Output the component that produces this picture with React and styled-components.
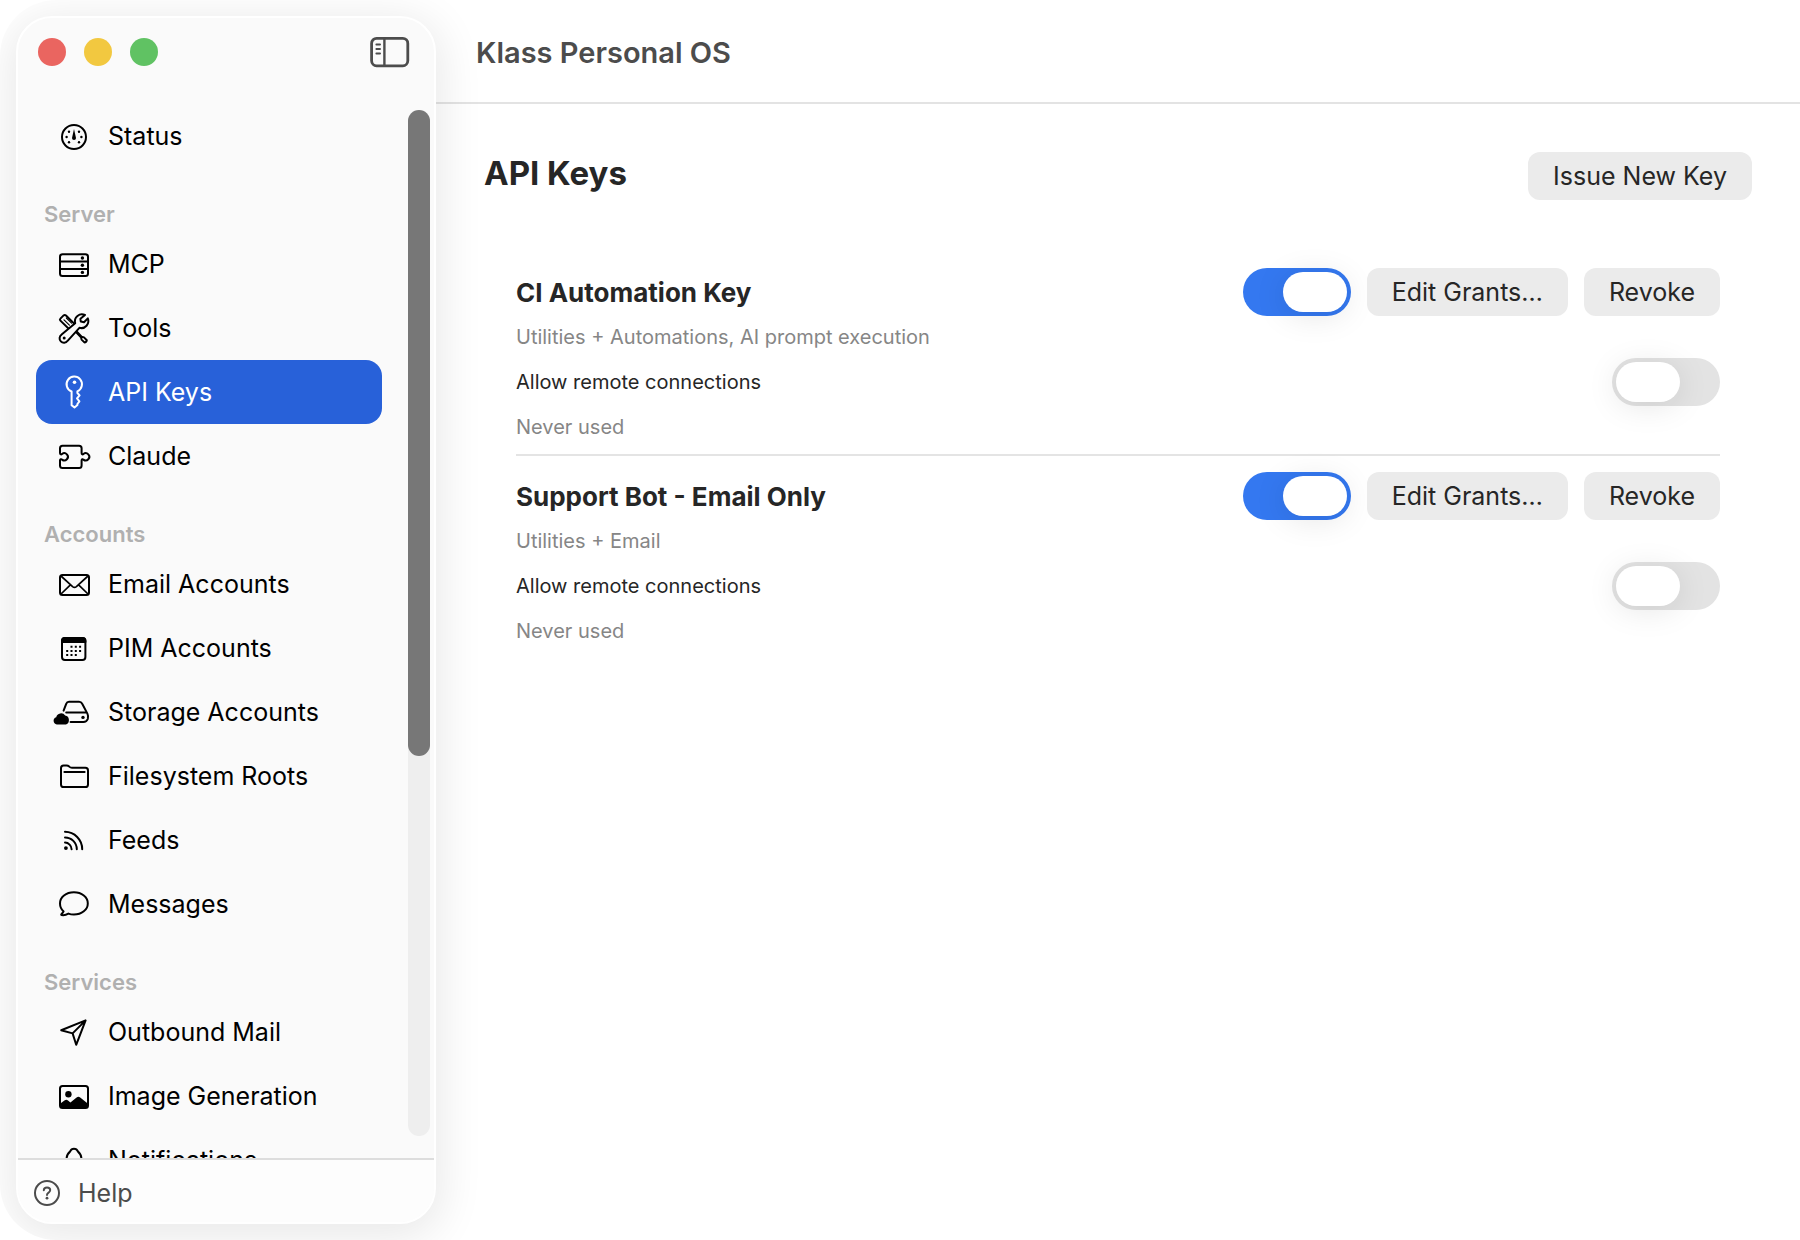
import React, { useState } from 'react';
import styled, { createGlobalStyle } from 'styled-components';

const sections = [
  { items: [{ name: "Status", icon: "gauge" }] },
  {
    title: "Server",
    items: [
      { name: "MCP", icon: "server" },
      { name: "Tools", icon: "tools" },
      { name: "API Keys", icon: "key" },
      { name: "Claude", icon: "puzzle" },
    ],
  },
  {
    title: "Accounts",
    items: [
      { name: "Email Accounts", icon: "mail" },
      { name: "PIM Accounts", icon: "calendar" },
      { name: "Storage Accounts", icon: "drive" },
      { name: "Filesystem Roots", icon: "folder" },
      { name: "Feeds", icon: "feed" },
      { name: "Messages", icon: "bubble" },
    ],
  },
  {
    title: "Services",
    items: [
      { name: "Outbound Mail", icon: "plane" },
      { name: "Image Generation", icon: "photo" },
      { name: "Notifications", icon: "bell" },
    ],
  },
];

const apiKeys = [
  { id: "ci", name: "CI Automation Key", grants: "Utilities + Automations, AI prompt execution", used: "Never used" },
  { id: "support", name: "Support Bot - Email Only", grants: "Utilities + Email", used: "Never used" },
];

const icons = {
  gauge: (
    <>
      <circle cx="22" cy="19" r="12" />
      <g fill="currentColor" stroke="none">
        <circle cx="14.6" cy="19" r="1.2" />
        <circle cx="29.4" cy="19" r="1.2" />
        <circle cx="17" cy="13.7" r="1.2" />
        <circle cx="27" cy="13.7" r="1.2" />
        <circle cx="17" cy="24.3" r="1.2" />
        <circle cx="27" cy="24.3" r="1.2" />
        <path d="M22 11 L24 20 A2 2 0 0 1 20 20 Z" />
      </g>
    </>
  ),
  server: (
    <>
      <rect x="8" y="8.2" width="28" height="21.8" rx="2.5" />
      <path d="M8 15.6 H36 M8 22.9 H36" />
      <g fill="currentColor" stroke="none">
        <circle cx="30.4" cy="12" r="1.7" />
        <circle cx="30.4" cy="19.2" r="1.7" />
        <circle cx="30.4" cy="26.4" r="1.7" />
      </g>
    </>
  ),
  tools: (
    <>
      <path d="M8.4 8.6 L11.6 5.4 Q12.8 4.4 14 5.5 L24.2 15.6 L18.8 20.8 L8.4 10.6 Q7.4 9.6 8.4 8.6 Z" />
      <path strokeWidth="1.2" d="M12 9.8 L17.4 15.2 M14.4 8 L19.6 13.2" />
      <path d="M22.6 20.6 L29 27.2 L29.6 29.6 L32.4 32.4 Q34.6 32.4 34.8 30.2 L32 27.4 L29.6 26.6 L24.2 21" />
      <path
        fill="#fafafa"
        d="M33 5 A7 7 0 0 0 23.2 13.2 L9.6 24.6 A4.4 4.4 0 1 0 15.6 30.8 L27.4 17.8 A7 7 0 0 0 35.8 8.4 L32 12.2 L28.8 11.6 L28.4 8.8 Z"
      />
      <circle cx="12.2" cy="28" r="1.5" fill="currentColor" stroke="none" />
    </>
  ),
  key: (
    <>
      <path d="M19.6 17.5 A7.7 7.7 0 1 1 25.4 17.3 L25.4 19 L27.6 21.4 L25 24.4 L27.4 27.4 L25.4 30 L25.4 31 L22.5 33.4 L19.6 31.2 Z" />
      <circle cx="22.5" cy="8.2" r="1.8" fill="currentColor" stroke="none" />
    </>
  ),
  puzzle: (
    <path d="M8 15 V10.2 A2.5 2.5 0 0 1 10.5 7.7 H27.1 A2.5 2.5 0 0 1 29.6 10.2 V15 C29.6 16.6 30.8 16.6 31.4 16 A3.6 3.6 0 1 1 31.4 21.6 C30.8 21 29.6 21 29.6 22.6 V27.4 A2.5 2.5 0 0 1 27.1 29.9 H10.5 A2.5 2.5 0 0 1 8 27.4 V22.6 C8 21 9.4 21 10 21.6 A3.6 3.6 0 1 0 10 16 C9.4 16.6 8 16.6 8 15 Z" />
  ),
  mail: (
    <>
      <rect x="8" y="9" width="29" height="20" rx="2.5" />
      <path strokeWidth="1.7" d="M9 10 L20.6 20.6 Q22.5 22.2 24.4 20.6 L36 10 M9 28 L18.4 18.8 M36 28 L26.6 18.8" />
    </>
  ),
  calendar: (
    <>
      <rect x="10" y="8" width="23.4" height="22" rx="3" />
      <path d="M10 11 A3 3 0 0 1 13 8 H30.4 A3 3 0 0 1 33.4 11 V12 H10 Z" fill="currentColor" />
      <path strokeWidth="2" strokeLinecap="butt" strokeDasharray="2 2.3" d="M18.5 16.8 H29.4 M14.2 21 H29.4 M14.2 25 H25" />
    </>
  ),
  drive: (
    <>
      <path d="M11.6 16.6 L14.2 9.8 Q15 7.8 17 7.8 H27 Q29.2 7.8 30.2 9.8 L35.4 19.6 Q36.6 22 35.8 25 Q34.6 28 31.4 28 H18.6" />
      <path d="M14.2 18.4 H33.8" />
      <circle cx="31" cy="23.4" r="1.7" fill="currentColor" stroke="none" />
      <path
        fill="currentColor"
        stroke="none"
        d="M4.8 30.4 A3.7 3.7 0 0 1 4.2 23.2 A5 5 0 0 1 13.2 21.6 A4.6 4.6 0 0 1 14 30.4 Z"
      />
    </>
  ),
  folder: (
    <>
      <path d="M9 10.2 Q9 7.6 11.6 7.6 H14.6 Q16 7.6 17.2 8.6 Q18.4 9.8 20 9.8 H33.4 Q36 9.8 36 12.4 V26.4 Q36 29 33.4 29 H11.6 Q9 29 9 26.4 Z" />
      <path d="M12.4 14 H32.6" />
    </>
  ),
  feed: (
    <>
      <circle cx="13.9" cy="26.1" r="1.9" fill="currentColor" stroke="none" />
      <path d="M13 9.8 A17.4 17.4 0 0 1 30.2 27.2 M13 15.4 A11.8 11.8 0 0 1 24.8 27.2 M13 20.6 A6.8 6.8 0 0 1 19.6 27.2" />
    </>
  ),
  bubble: (
    <path d="M11.6 25.4 Q8 22 8 17.4 C8 11.2 14 6.3 21.9 6.3 S35.8 11.2 35.8 17.4 S29.8 28.6 21.9 28.6 Q19 28.6 16.4 27.6 Q13 29.6 9.6 29 Q8.8 28.8 9.6 28 Q11 26.6 11.6 25.4 Z" />
  ),
  plane: <path d="M33.6 6.4 L9.2 16.2 L20.6 19.4 L24.2 30.8 Z M33.6 6.4 L20.6 19.4" />,
  photo: (
    <>
      <rect x="8" y="8" width="28" height="22" rx="2.5" />
      <circle cx="16.4" cy="16.2" r="3.2" fill="currentColor" stroke="none" />
      <path
        fill="currentColor"
        stroke="none"
        d="M8 25.8 L12.8 22.2 Q14.4 21 16 22.4 L18.4 24.4 L24.6 19.4 Q26.4 18 28.2 19.4 L36 25.8 V30 H8 Z"
      />
    </>
  ),
  bell: (
    <path d="M22 6.8 Q19.2 6.8 18 9.6 Q14.8 12.2 14.6 16.4 Q14.4 21 11 25.4 H33 Q29.6 21 29.4 16.4 Q29.2 12.2 26 9.6 Q24.8 6.8 22 6.8 Z M18.6 28.4 A3.6 3.6 0 0 0 25.4 28.4" />
  ),
};

function NavIcon({ name }) {
  return (
    <IconSvg viewBox="0 0 44 36" aria-hidden="true">
      {icons[name]}
    </IconSvg>
  )
}

function Sidebar() {
  return (
    <SidebarPanel>
      <SidebarTop>
        <Lights>
          <Light type="button" aria-label="Close" $color="#ea6560" />
          <Light type="button" aria-label="Minimize" $color="#f2c840" />
          <Light type="button" aria-label="Zoom" $color="#60c263" />
        </Lights>
        <ToggleSidebar type="button" aria-label="Toggle sidebar">
          <svg width="40" height="32" viewBox="0 0 40 32" fill="none" stroke="currentColor" strokeLinecap="round">
            <rect x="1.6" y="2.4" width="36.2" height="27.4" rx="5" strokeWidth="2.8" />
            <path d="M14.4 2.4 V29.8" strokeWidth="2.4" />
            <path d="M6.4 8.6 H10 M6.4 13 H10 M6.4 17.4 H10" strokeWidth="2" />
          </svg>
        </ToggleSidebar>
      </SidebarTop>
      <ScrollArea>
        <Nav>
          {sections.map((section) => (
            <div key={section.title || "top"}>
              {section.title && <SectionTitle>{section.title}</SectionTitle>}
              {section.items.map((item) => (
                <NavLink key={item.name} href="#" $active={item.name === "API Keys"}>
                  <NavIcon name={item.icon} />
                  {item.name}
                </NavLink>
              ))}
            </div>
          ))}
        </Nav>
        <ScrollTrack>
          <ScrollThumb />
        </ScrollTrack>
      </ScrollArea>
      <HelpLink href="#">
        <svg width="28" height="28" viewBox="0 0 28 28" fill="none" stroke="currentColor" strokeWidth="2" strokeLinecap="round">
          <circle cx="14" cy="14" r="12" />
          <path d="M10.8 11.2 Q10.9 8.4 14 8.4 Q17.2 8.4 17.2 11.1 Q17.2 12.6 15.6 13.6 Q14 14.6 14 16" />
          <circle cx="14" cy="19.2" r="1.4" fill="currentColor" stroke="none" />
        </svg>
        Help
      </HelpLink>
    </SidebarPanel>
  )
}

function KeyRow({ item }) {
  const [enabled, setEnabled] = useState(true);
  const [remote, setRemote] = useState(false);

  return (
    <Row>
      <RowLine>
        <KeyName>{item.name}</KeyName>
        <Actions>
          <Switch
            type="checkbox"
            aria-label={`${item.name} enabled`}
            checked={enabled}
            onChange={(e) => setEnabled(e.target.checked)}
          />
          <Button type="button">Edit Grants…</Button>
          <Button type="button">Revoke</Button>
        </Actions>
      </RowLine>
      <Note>{item.grants}</Note>
      <RowLine>
        <RemoteLabel htmlFor={`remote-${item.id}`}>Allow remote connections</RemoteLabel>
        <Switch
          type="checkbox"
          id={`remote-${item.id}`}
          checked={remote}
          onChange={(e) => setRemote(e.target.checked)}
        />
      </RowLine>
      <Note>{item.used}</Note>
    </Row>
  )
}

export default function App() {
  return (
    <>
      <GlobalStyle />
      <Window>
        <Sidebar />
        <Main>
          <TitleBar>
            <AppTitle>Klass Personal OS</AppTitle>
          </TitleBar>
          <Content>
            <ContentHeader>
              <PageTitle>API Keys</PageTitle>
              <Button type="button">Issue New Key</Button>
            </ContentHeader>
            <KeyList>
              {apiKeys.map((item) => (
                <KeyRow key={item.id} item={item} />
              ))}
            </KeyList>
          </Content>
        </Main>
      </Window>
    </>
  )
}

const GlobalStyle = createGlobalStyle`
  * {
    box-sizing: border-box;
  }
  body {
    margin: 0;
    background: #fff;
    color: #262626;
    font-family: Inter, "Liberation Sans", sans-serif;
    font-size: 25px;
  }
  button {
    font: inherit;
    border: none;
    padding: 0;
  }
`;
const Window = styled.div`
  display: flex;
  height: 100vh;
  padding: 16px 0 16px 16px;
  border-radius: 56px;
  overflow: hidden;
  background: #fff;
`;
const SidebarPanel = styled.aside`
  display: flex;
  flex-direction: column;
  flex: none;
  width: 420px;
  border: 2px solid #fff;
  border-radius: 36px;
  overflow: hidden;
  background: #fafafa;
  box-shadow: 0 8px 44px 6px rgba(0, 0, 0, 0.09);
  z-index: 1;
`;
const SidebarTop = styled.div`
  display: flex;
  flex: none;
  justify-content: space-between;
  align-items: center;
  height: 68px;
  padding: 0 24px 0 20px;
`;
const Lights = styled.div`
  display: flex;
  gap: 18px;
`;
const Light = styled.button`
  width: 28px;
  height: 28px;
  border-radius: 50%;
  background: ${(props) => props.$color};
`;
const ToggleSidebar = styled.button`
  display: flex;
  background: none;
  color: #4c4c4c;
`;
const ScrollArea = styled.div`
  display: flex;
  flex: 1;
  min-height: 0;
  overflow: hidden;
`;
const Nav = styled.nav`
  flex: 1;
  padding: 18px 26px 0 18px;
`;
const SectionTitle = styled.h2`
  height: 64px;
  margin: 0;
  padding: 34px 8px 0;
  color: #b0b0b0;
  font-size: 22px;
  font-weight: 600;
  line-height: 24px;
`;
const NavLink = styled.a`
  display: flex;
  align-items: center;
  gap: 12px;
  height: 64px;
  padding-left: 16px;
  border-radius: 16px;
  color: ${(props) => (props.$active ? "#fff" : "#000")};
  background: ${(props) => (props.$active ? "#2861d9" : "none")};
  text-decoration: none;
  white-space: nowrap;
`;
const IconSvg = styled.svg`
  flex: none;
  width: 44px;
  height: 36px;
  fill: none;
  stroke: currentColor;
  stroke-width: 2;
  stroke-linecap: round;
  stroke-linejoin: round;
`;
const ScrollTrack = styled.div`
  flex: none;
  width: 22px;
  margin: 24px 4px 22px 0;
  border-radius: 11px;
  background: #eeeeee;
`;
const ScrollThumb = styled.div`
  height: 63%;
  border-radius: 11px;
  background: #777777;
`;
const HelpLink = styled.a`
  display: flex;
  flex: none;
  align-items: center;
  gap: 17px;
  height: 64px;
  padding: 4px 15px 0;
  border-top: 2px solid #dddddd;
  background: #fdfdfd;
  color: #4c4c4c;
  text-decoration: none;
`;
const Main = styled.main`
  flex: 1;
  min-width: 0;
  margin-top: -16px;
`;
const TitleBar = styled.header`
  display: flex;
  align-items: center;
  height: 104px;
  padding: 2px 40px 0;
  border-bottom: 2px solid #e3e3e3;
`;
const AppTitle = styled.h1`
  margin: 0;
  color: #4c4c4c;
  font-size: 29px;
  font-weight: 600;
`;
const Content = styled.div`
  padding: 48px;
`;
const ContentHeader = styled.div`
  display: flex;
  justify-content: space-between;
  align-items: flex-start;
  margin-bottom: 68px;
`;
const PageTitle = styled.h2`
  margin: 0;
  font-size: 33px;
  font-weight: 700;
  line-height: 42px;
`;
const Button = styled.button`
  height: 48px;
  padding: 0 25px;
  border-radius: 12px;
  background: #ebebeb;
  color: #262626;
  white-space: nowrap;
`;
const KeyList = styled.div`
  padding: 0 32px;
`;
const Row = styled.section`
  display: flex;
  flex-direction: column;
  gap: 8px;
  padding-bottom: 14px;

  & + & {
    padding-top: 16px;
    border-top: 2px solid #e4e4e4;
  }
`;
const RowLine = styled.div`
  display: flex;
  justify-content: space-between;
  align-items: center;
  height: 48px;
`;
const Actions = styled.div`
  display: flex;
  gap: 16px;
`;
const KeyName = styled.h3`
  margin: 0;
  font-size: 26px;
  font-weight: 700;
`;
const Note = styled.p`
  margin: 0;
  color: #868686;
  font-size: 20px;
  line-height: 26px;
`;
const RemoteLabel = styled.label`
  font-size: 20px;
  line-height: 26px;
`;
const Switch = styled.input`
  appearance: none;
  width: 108px;
  height: 48px;
  margin: 0;
  padding: 4px;
  border-radius: 24px;
  background: #e3e3e3;

  &::before {
    content: "";
    display: block;
    width: 64px;
    height: 40px;
    border-radius: 20px;
    background: #fff;
    box-shadow: 0 4px 32px rgba(0, 0, 0, 0.1);
  }

  &:checked {
    background: #3478f0;
  }

  &:checked::before {
    margin-left: auto;
  }
`;
